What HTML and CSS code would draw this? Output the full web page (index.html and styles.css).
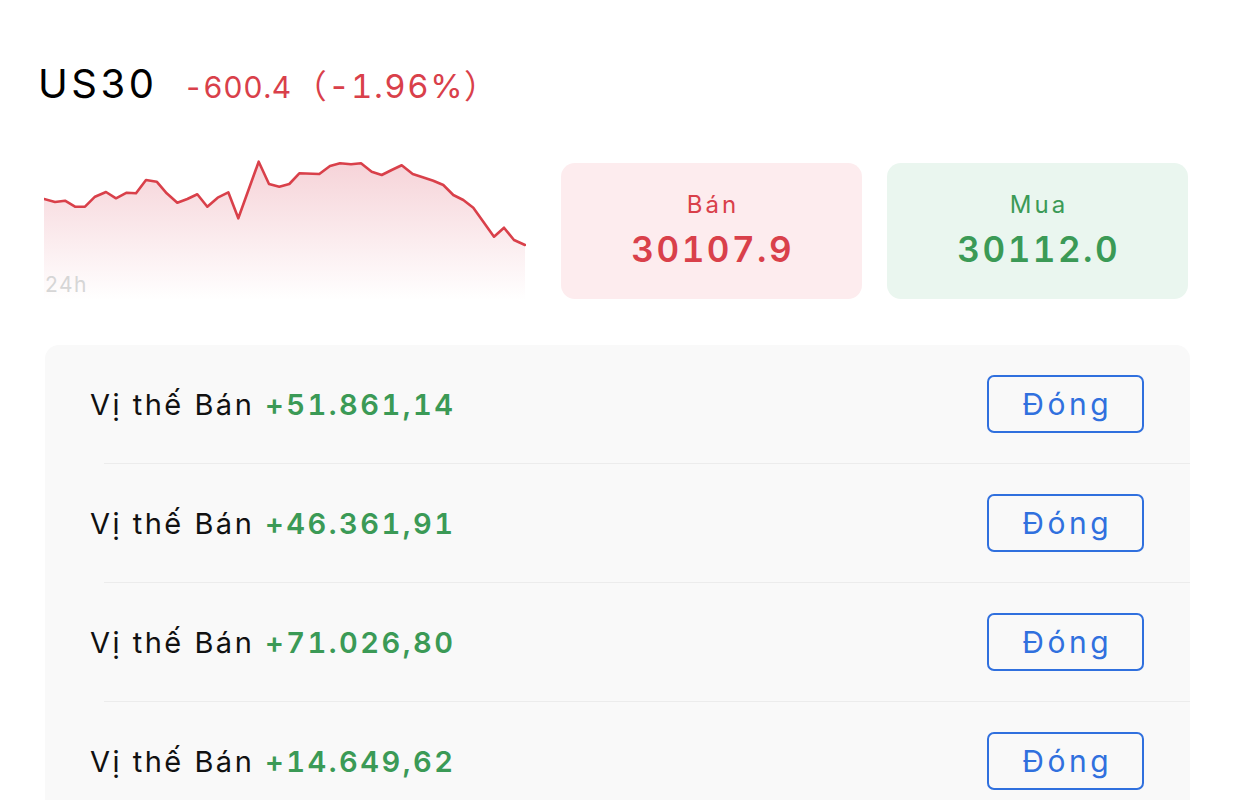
FILE: index.html
```html
<!DOCTYPE html>
<html lang="vi">
<head>
<meta charset="utf-8">
<title>US30</title>
<link rel="stylesheet" href="styles.css">
</head>
<body>
<div class="page">
  <header class="head">
    <span class="sym">US30</span>
    <span class="chg">-600.4</span>
    <span class="pct">（-1.96%）</span>
  </header>

  <section class="quote">
    <div class="chart">
      <svg class="spark" width="482" height="150" viewBox="0 0 482 150">
        <defs>
          <linearGradient id="fade" x1="0" y1="0" x2="0" y2="1">
            <stop offset="0" stop-color="#f6d3d8"/>
            <stop offset="1" stop-color="#ffffff"/>
          </linearGradient>
        </defs>
        <polygon fill="url(#fade)" points="0,49 11,52 21,50.7 31,56.7 41,56.7 51,46.7 62,42 72,48.3 82.7,42.7 92,43.3 102,30 112.7,31.7 122.7,43.3 133.3,52.7 143.3,49 153.3,44.3 163.3,56.7 173.7,47.7 184.3,42.3 194.3,68.3 214.7,11.7 225,34 235.3,36.7 245.3,34 255.3,23.3 275.3,24 286,16 296,13.3 307,14.3 317,13.3 327.7,21.7 337.7,25 347.7,20 357.7,15.3 368.7,24 378.7,27.3 389.3,30.7 399.3,35 409.3,45 419.3,50 429.3,57.7 439.3,71.7 450,86.7 460,77.7 470,90 481,95 481,150 0,150"/>
        <polyline fill="none" stroke="#d9404a" stroke-width="2.6" stroke-linejoin="round" stroke-linecap="round" points="0,49 11,52 21,50.7 31,56.7 41,56.7 51,46.7 62,42 72,48.3 82.7,42.7 92,43.3 102,30 112.7,31.7 122.7,43.3 133.3,52.7 143.3,49 153.3,44.3 163.3,56.7 173.7,47.7 184.3,42.3 194.3,68.3 214.7,11.7 225,34 235.3,36.7 245.3,34 255.3,23.3 275.3,24 286,16 296,13.3 307,14.3 317,13.3 327.7,21.7 337.7,25 347.7,20 357.7,15.3 368.7,24 378.7,27.3 389.3,30.7 399.3,35 409.3,45 419.3,50 429.3,57.7 439.3,71.7 450,86.7 460,77.7 470,90 481,95"/>
      </svg>
      <span class="tf">24h</span>
    </div>
    <div class="price sell">
      <div class="lbl">Bán</div>
      <div class="val">30107.9</div>
    </div>
    <div class="price buy">
      <div class="lbl">Mua</div>
      <div class="val">30112.0</div>
    </div>
  </section>

  <section class="positions">
    <div class="row">
      <div class="pos">Vị thế Bán <span class="pnl">+51.861,14</span></div>
      <button class="close">Đóng</button>
    </div>
    <div class="sep"></div>
    <div class="row">
      <div class="pos">Vị thế Bán <span class="pnl">+46.361,91</span></div>
      <button class="close">Đóng</button>
    </div>
    <div class="sep"></div>
    <div class="row">
      <div class="pos">Vị thế Bán <span class="pnl">+71.026,80</span></div>
      <button class="close">Đóng</button>
    </div>
    <div class="sep"></div>
    <div class="row">
      <div class="pos">Vị thế Bán <span class="pnl">+14.649,62</span></div>
      <button class="close">Đóng</button>
    </div>
  </section>
</div>
</body>
</html>
```

FILE: styles.css
```css
* { box-sizing: border-box; }
html, body {
  margin: 0;
  padding: 0;
  background: #ffffff;
  font-family: Inter, "Noto Sans", "Noto Sans CJK SC", sans-serif;
  color: #000;
  overflow: hidden;
}
.page {
  width: 1233px;
  height: 800px;
  overflow: hidden;
}

/* header */
.head {
  padding: 61px 0 43px 38px;
  height: 150px;
  display: flex;
  align-items: baseline;
  line-height: 46px;
}
.sym {
  font-size: 40px;
  font-weight: 400;
  letter-spacing: 3.5px;
}
.chg {
  margin-left: 26px;
  font-size: 30px;
  font-variant-numeric: tabular-nums;
  letter-spacing: 0.5px;
  color: #d9404a;
}
.pct {
  margin-left: 2px;
  font-family: Inter, "Noto Sans CJK SC", sans-serif;
  font-size: 33px;
  font-variant-numeric: tabular-nums;
  letter-spacing: 1.5px;
  color: #d9404a;
}

/* chart + prices */
.quote {
  display: flex;
  align-items: flex-end;
  padding-left: 44px;
  height: 150px;
}
.chart {
  position: relative;
  width: 482px;
  height: 150px;
  margin-right: 35px;
}
.spark { display: block; }
.tf {
  position: absolute;
  left: 1px;
  top: 122px;
  font-size: 21px;
  letter-spacing: 1.5px;
  color: #d6d6d6;
}
.price {
  width: 301px;
  height: 136px;
  border-radius: 14px;
  margin-bottom: 1px;
  display: flex;
  flex-direction: column;
  align-items: center;
  padding-top: 28px;
}
.price + .price { margin-left: 25px; }
.sell { background: #fdecee; color: #d9404a; }
.buy { background: #eaf6ef; color: #3b9a56; }
.lbl {
  font-size: 24px;
  line-height: 28px;
  letter-spacing: 3px;
  padding-left: 3px;
}
.val {
  margin-top: 10px;
  font-size: 35px;
  line-height: 40px;
  font-weight: 600;
  font-variant-numeric: tabular-nums;
  letter-spacing: 2.5px;
  padding-left: 2.5px;
}

/* positions */
.positions {
  margin: 45px 43px 0 45px;
  background: #f9f9f9;
  border-radius: 14px 14px 0 0;
  height: 460px;
}
.row {
  height: 118px;
  display: flex;
  align-items: center;
  justify-content: space-between;
  padding: 0 46px 0 45px;
}
.pos {
  font-size: 29px;
  letter-spacing: 2.5px;
  color: #111;
}
.pnl {
  color: #3b9a56;
  font-weight: 600;
  font-variant-numeric: tabular-nums;
  letter-spacing: 2.5px;
}
.sep {
  height: 1px;
  margin-left: 59px;
  background: #ececec;
}
.close {
  width: 157px;
  height: 58px;
  border: 2px solid #3070de;
  border-radius: 7px;
  background: transparent;
  color: #3070de;
  font-family: Inter, "Noto Sans", sans-serif;
  font-size: 30px;
  letter-spacing: 3.5px;
  padding: 0 0 0 3.5px;
  margin-top: -1px;
}
```
